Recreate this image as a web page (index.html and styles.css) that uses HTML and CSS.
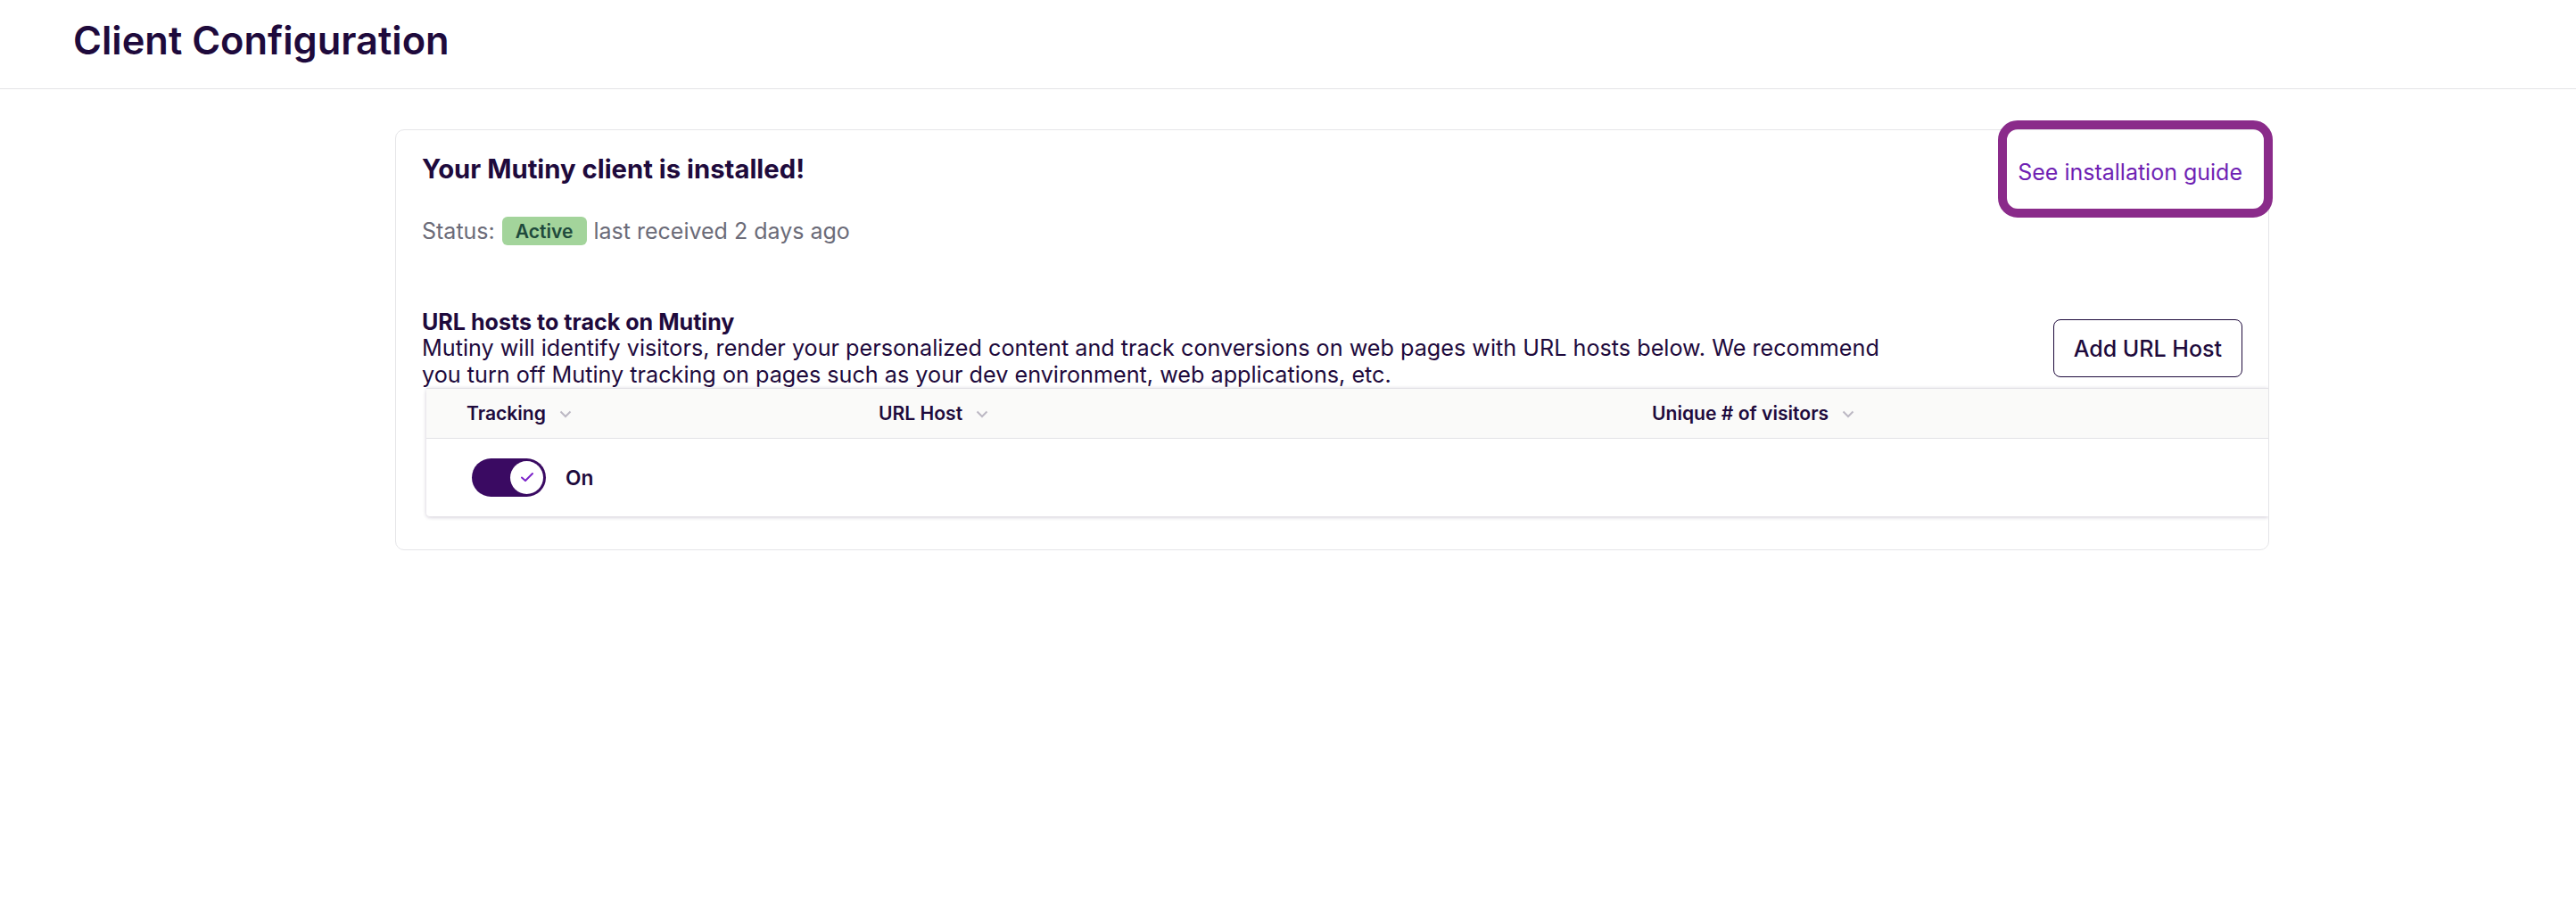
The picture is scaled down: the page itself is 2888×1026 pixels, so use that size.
FILE: index.html
```html
<!DOCTYPE html>
<html lang="en">
<head>
<meta charset="utf-8">
<title>Client Configuration</title>
<link rel="stylesheet" href="styles.css">
</head>
<body>
<header class="page-header">
  <h1 class="page-title">Client Configuration</h1>
</header>
<main class="content">
  <section class="card">
    <div class="install-row">
      <h2 class="install-title">Your Mutiny client is installed!</h2>
      <a class="guide-link" href="#">See installation guide<span class="highlight"></span></a>
    </div>
    <div class="status-row">
      <span class="status-label">Status:</span>
      <span class="badge">Active</span>
      <span class="status-label">last received 2 days ago</span>
    </div>
    <div class="hosts-head">
      <div class="hosts-text">
        <h3 class="hosts-title">URL hosts to track on Mutiny</h3>
        <p class="hosts-desc">Mutiny will identify visitors, render your personalized content and track conversions on web pages with URL hosts below. We recommend you turn off Mutiny tracking on pages such as your dev environment, web applications, etc.</p>
      </div>
      <button class="btn-outline" type="button">Add URL Host</button>
    </div>
    <div class="table">
      <div class="table-head">
        <div class="th">Tracking
          <svg class="chev" width="14" height="9" viewBox="0 0 14 9"><path d="M1.5 1.5 L7 7 L12.5 1.5" fill="none" stroke="#bcb8c4" stroke-width="2"/></svg>
        </div>
        <div class="th">URL Host
          <svg class="chev" width="14" height="9" viewBox="0 0 14 9"><path d="M1.5 1.5 L7 7 L12.5 1.5" fill="none" stroke="#bcb8c4" stroke-width="2"/></svg>
        </div>
        <div class="th">Unique # of visitors
          <svg class="chev" width="14" height="9" viewBox="0 0 14 9"><path d="M1.5 1.5 L7 7 L12.5 1.5" fill="none" stroke="#bcb8c4" stroke-width="2"/></svg>
        </div>
      </div>
      <div class="table-row">
        <div class="td td-toggle">
          <span class="toggle">
            <span class="knob">
              <svg width="16" height="12" viewBox="0 0 16 12"><path d="M2 6.5 L6 10 L14 2" fill="none" stroke="#7b22c9" stroke-width="2" stroke-linecap="round" stroke-linejoin="round"/></svg>
            </span>
          </span>
          <span class="toggle-label">On</span>
        </div>
        <div class="td"></div>
        <div class="td"></div>
      </div>
    </div>
  </section>
</main>
</body>
</html>
```

FILE: styles.css
```css
* { box-sizing: border-box; }

html, body {
  margin: 0;
  padding: 0;
  background: #ffffff;
}

body {
  font-family: Inter, "Noto Sans", "Liberation Sans", sans-serif;
  color: #1e0a3c;
}

.page-header {
  height: 100px;
  padding: 20px 0 0 82px;
  border-bottom: 1px solid #e4e4e6;
}

.page-title {
  margin: 0;
  font-size: 43.4px;
  line-height: 51px;
  font-weight: 600;
  color: #1e0a3c;
}

.content {
  padding: 45px 0 0 443px;
}

.card {
  width: 2101px;
  border: 1px solid #e5e5e8;
  border-radius: 10px;
  padding: 26px 29px 37px 29px;
}

.install-row {
  display: flex;
  justify-content: space-between;
  align-items: flex-start;
}

.install-title {
  margin: 0;
  font-size: 29.25px;
  line-height: 36px;
  font-weight: 700;
  color: #1e0a3c;
}

.guide-link {
  position: relative;
  margin-top: 3px;
  font-size: 25px;
  line-height: 36px;
  color: #6f1fb3;
  text-decoration: none;
}

.highlight {
  position: absolute;
  left: -22px;
  right: -34px;
  top: -40px;
  bottom: -33px;
  border: 10px solid #8a2b8a;
  border-radius: 22px;
  pointer-events: none;
}

.status-row {
  display: flex;
  align-items: center;
  gap: 8px;
  height: 32px;
  margin-top: 32px;
}

.status-label {
  font-size: 25px;
  line-height: 32px;
  color: #6b6b78;
}

.badge {
  display: inline-flex;
  align-items: center;
  height: 32px;
  padding: 0 15px;
  border-radius: 6px;
  background: #a3d49b;
  color: #1f4a3c;
  font-size: 21.1px;
  font-weight: 600;
}

.hosts-head {
  display: flex;
  justify-content: space-between;
  align-items: center;
  margin-top: 72px;
}

.hosts-text {
  max-width: 1650px;
}

.hosts-title {
  margin: 0;
  font-size: 25.1px;
  line-height: 29.25px;
  font-weight: 700;
  color: #1e0a3c;
}

.hosts-desc {
  margin: 0;
  font-size: 25.2px;
  line-height: 29.25px;
  font-weight: 400;
  color: #1e0a3c;
}

.btn-outline {
  display: inline-flex;
  align-items: center;
  justify-content: center;
  height: 65px;
  padding: 0 22px;
  border: 1px solid #1e0a3c;
  border-radius: 8px;
  background: #ffffff;
  font-family: Inter, "Noto Sans", "Liberation Sans", sans-serif;
  font-size: 25px;
  font-weight: 500;
  color: #1e0a3c;
}

.table {
  margin: 0 -29px 0 5px;
  border-radius: 4px 0 0 4px;
  box-shadow: 0 1px 4px rgba(30, 10, 60, 0.22);
  clip-path: inset(-10px 0 -10px -10px);
  background: #ffffff;
}

.table-head {
  display: grid;
  grid-template-columns: 462px 867px 1fr;
  height: 57px;
  background: #fafaf9;
  border-bottom: 1px solid #e3e3e6;
  border-top: 1px solid #e2e1e6;
}

.th {
  display: flex;
  align-items: center;
  gap: 15px;
  padding-left: 45px;
  font-size: 21.1px;
  font-weight: 600;
  color: #1e0a3c;
}

.chev {
  margin-top: 2px;
}

.table-row {
  display: grid;
  grid-template-columns: 462px 867px 1fr;
  height: 87px;
}

.td {
  display: flex;
  align-items: center;
}

.td-toggle {
  padding-left: 51px;
  gap: 22px;
}

.toggle {
  display: inline-flex;
  align-items: center;
  justify-content: flex-end;
  width: 83px;
  height: 43px;
  padding: 0 3px;
  border-radius: 22px;
  background: #3a0a62;
}

.knob {
  display: inline-flex;
  align-items: center;
  justify-content: center;
  width: 37px;
  height: 37px;
  border-radius: 50%;
  background: #ffffff;
}

.toggle-label {
  font-size: 22.75px;
  font-weight: 600;
  color: #1e0a3c;
}
```
